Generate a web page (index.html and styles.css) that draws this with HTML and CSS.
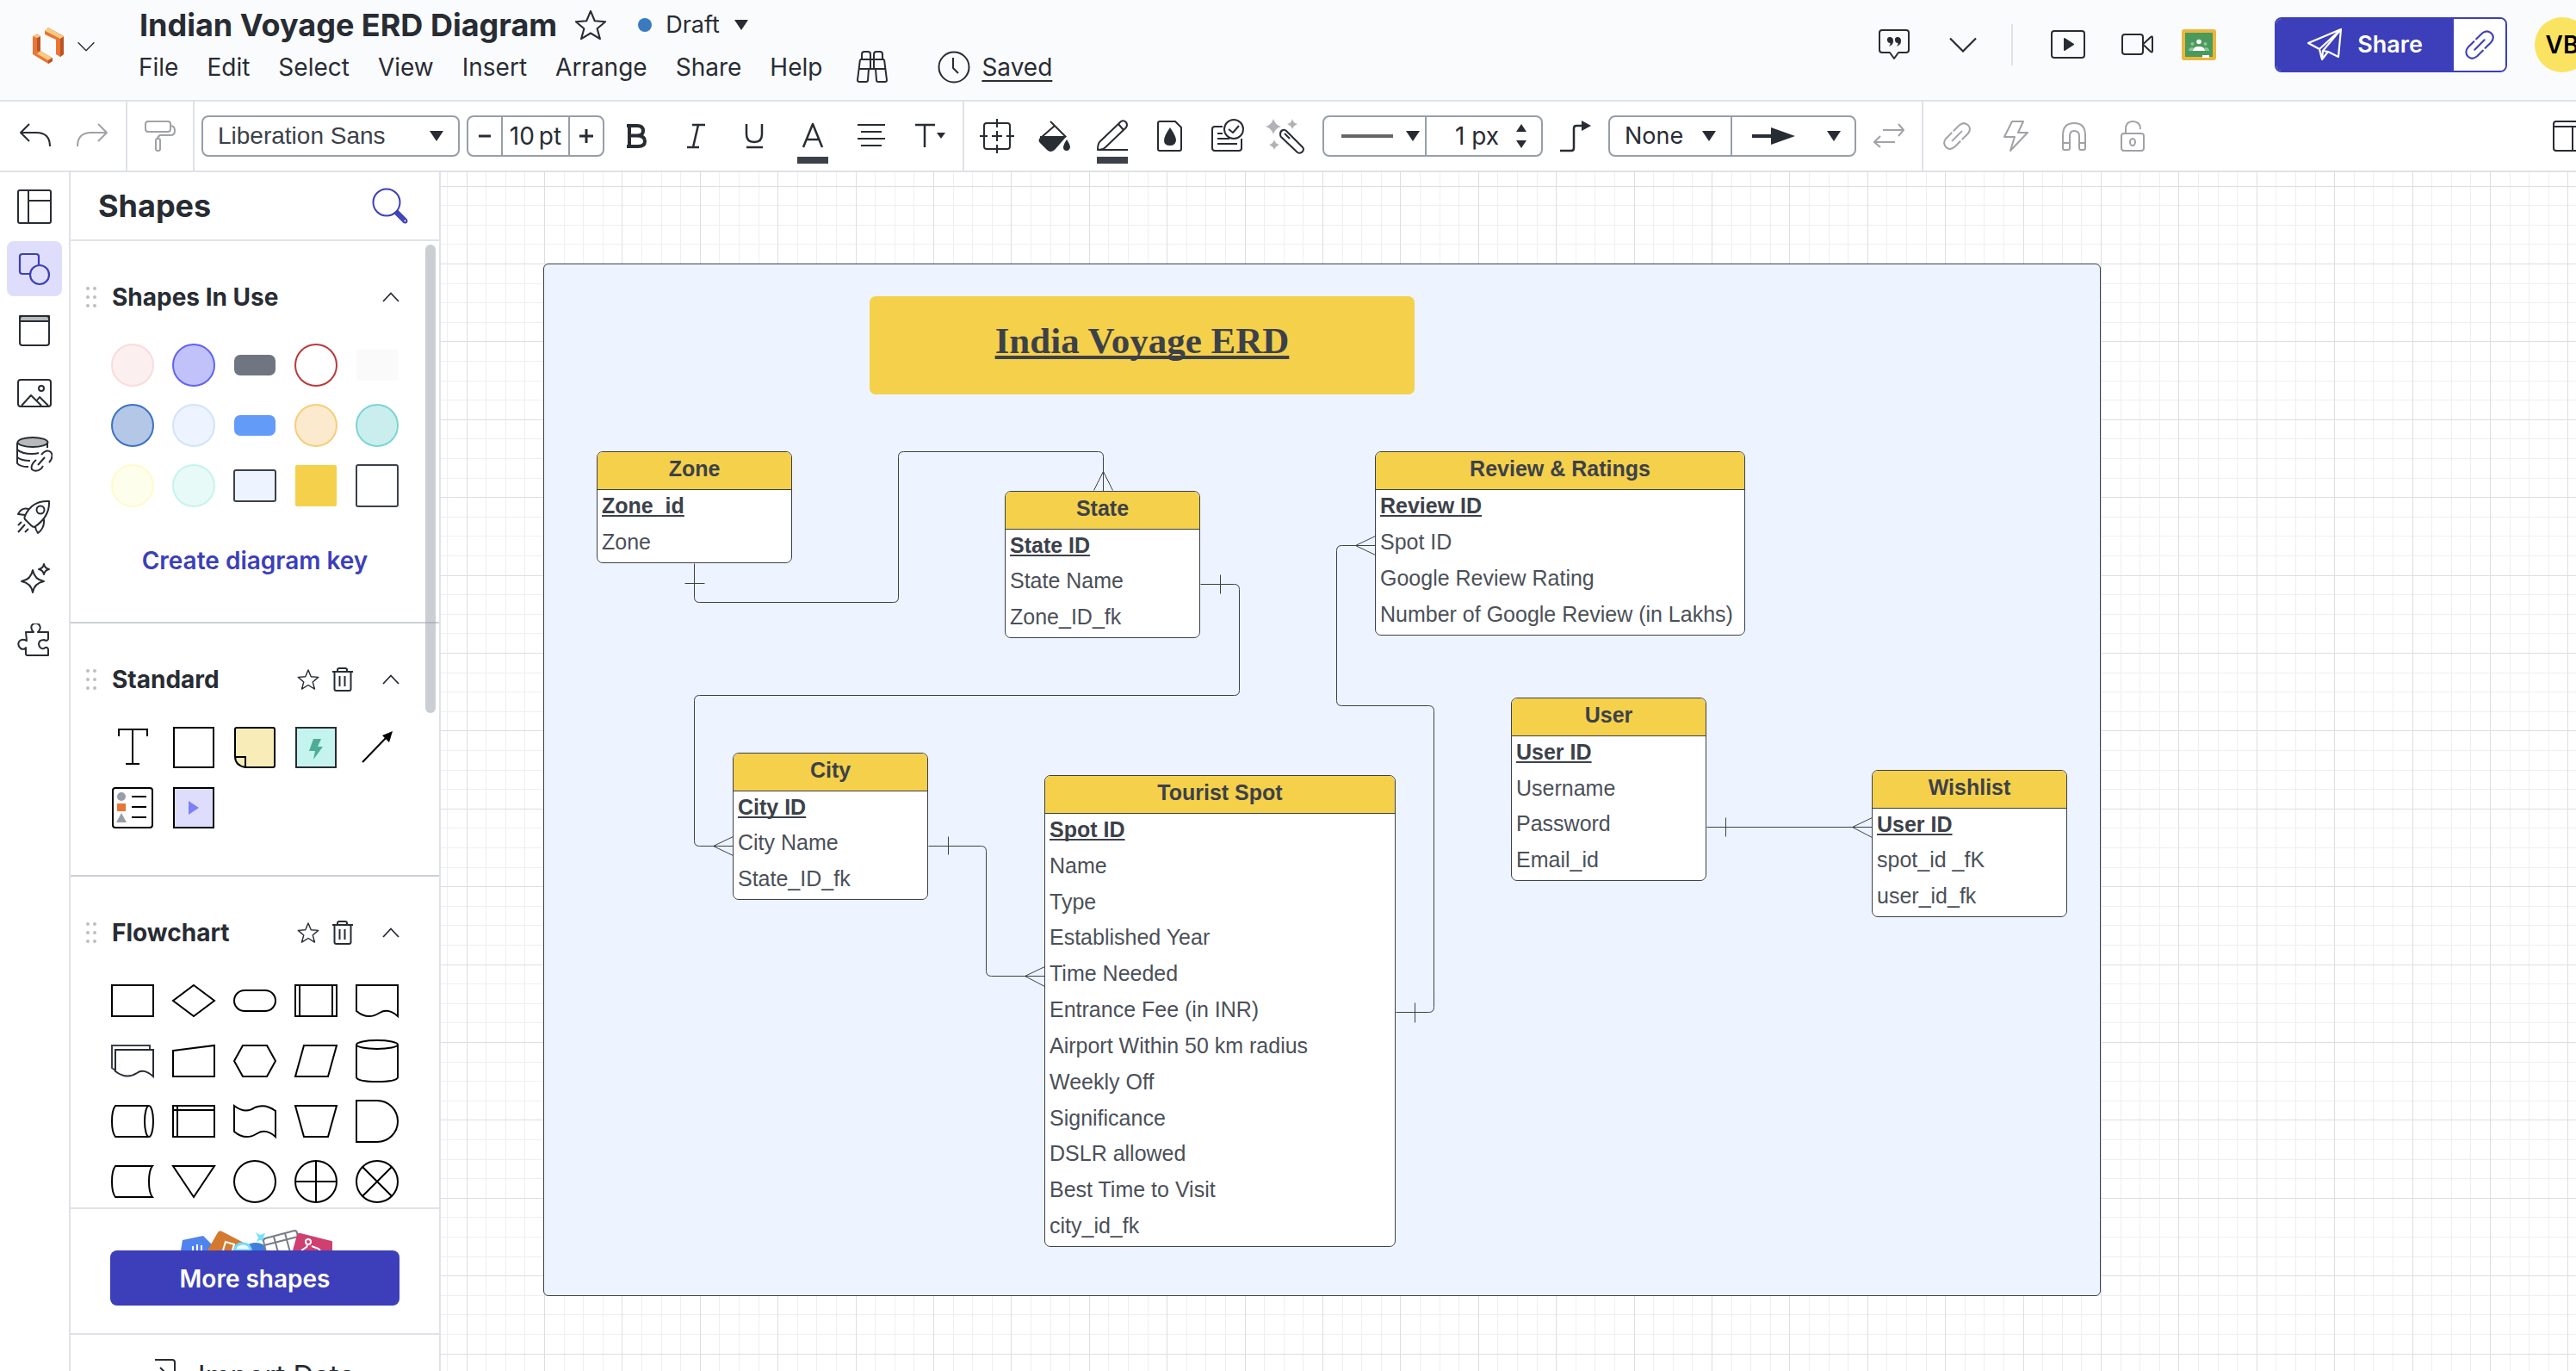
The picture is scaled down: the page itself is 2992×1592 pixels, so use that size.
FILE: index.html
```html
<!DOCTYPE html>
<html lang="en">
<head>
<meta charset="utf-8">
<title>Indian Voyage ERD Diagram</title>
<link rel="stylesheet" href="styles.css">
</head>
<body>
<svg class="defs" aria-hidden="true">
  <symbol id="caret" viewBox="0 0 16 12"><path d="M0 0H16L8 12Z" fill="#282c33"/></symbol>
  <symbol id="chev-down" viewBox="0 0 32 18"><path d="M1 1.500L16 16.500L31 1.500" fill="none" stroke="#282c33" stroke-width="2.200"/></symbol>
  <symbol id="chev-up" viewBox="0 0 20 12"><path d="M1 11L10 1.500L19 11" fill="none" stroke="#282c33" stroke-width="1.800"/></symbol>
  <symbol id="grip" viewBox="0 0 12 24"><g fill="#bfbfbf"><circle cx="2" cy="2" r="2"/><circle cx="10" cy="2" r="2"/><circle cx="2" cy="12" r="2"/><circle cx="10" cy="12" r="2"/><circle cx="2" cy="22" r="2"/><circle cx="10" cy="22" r="2"/></g></symbol>
  <symbol id="star" viewBox="0 0 40 40"><path d="M20 3L25 15L38 16L28 24.500L31.500 37L20 30L8.500 37L12 24.500L2 16L15 15Z" fill="none" stroke="currentColor" stroke-width="2.200" stroke-linejoin="round"/></symbol>
  <symbol id="trash" viewBox="0 0 24 28"><path d="M0 5H24M6 5V3Q6 1 8 1H15Q17 1 17 3V5M2.500 5V25Q2.500 27 4.500 27H19.500Q21.500 27 21.500 25V5M8.500 10V22M14.500 10V22" fill="none" stroke="#282c33" stroke-width="2"/></symbol>
  <symbol id="link" viewBox="0 0 40 40"><g fill="none" stroke="currentColor" stroke-width="2.200" stroke-linecap="round" stroke-linejoin="round"><path d="M14 26L26 14"/><path d="M16 13L23 6Q29 1 34.500 6Q39 11 34 17L27 24"/><path d="M13 16L6 23Q1 29 6 34.500Q11 39 17 34L24 27"/></g></symbol>
</svg>

<header class="topbar">
  <button class="logo" aria-label="Documents">
    <svg width="36" height="42" viewBox="0 0 36 42"><path d="M0 10L5 7.500L9 10V27L14 30V30L23 35.500V39L18 42L0 31Z" fill="#e97635"/><path d="M5 12L9 10V28L5 27Z" fill="#bd5424"/><path d="M0 10L5 8L9 10L5 12Z" fill="#f7cb82"/><path d="M9 27L23 35L18 38L5 30.500Z" fill="#f7cb82"/><path d="M18 38L23 35V39L18 42Z" fill="#bd5424"/><path d="M14 4L18 0L36 10V31L32 34L27 31V14L14 8Z" fill="#e97635"/><path d="M14 3.500L18 0L36 10.500L32 13Z" fill="#f7cb82"/><path d="M32 13L36 10.500V31L32 34Z" fill="#bd5424"/></svg>
    <svg width="20" height="12" viewBox="0 0 32 18" class="ic"><use href="#chev-down"/></svg>
  </button>
  <div class="doc">
    <div class="doc-row">
      <h1>Indian Voyage ERD Diagram</h1>
      <button class="plain star-doc" aria-label="Favorite"><svg width="38" height="38"><use href="#star"/></svg></button>
      <span class="dot"></span>
      <button class="plain draft">Draft <svg width="16" height="12"><use href="#caret"/></svg></button>
    </div>
    <nav class="menu">
      <button class="plain">File</button><button class="plain">Edit</button><button class="plain">Select</button><button class="plain">View</button><button class="plain">Insert</button><button class="plain">Arrange</button><button class="plain">Share</button><button class="plain">Help</button>
      <button class="plain find" aria-label="Find"><svg width="38" height="38" viewBox="0 0 38 38" class="ln"><path d="M7 10V4Q7 1 10 1H14Q17 1 17 4V21M21 21V4Q21 1 24 1H28Q31 1 31 4V10M17 10H21M5 10H33M5 10L2 34Q2 36 4 36H12Q14 36 14 34L15 21H23L24 34Q24 36 26 36H34Q36 36 36 34L33 10M3 21H15M23 21H35"/></svg></button>
      <svg width="38" height="38" viewBox="0 0 38 38" class="ln clock"><circle cx="19" cy="19" r="17.500"/><path d="M18 8V20L24 26"/></svg>
      <a href="#history" class="saved">Saved</a>
    </nav>
  </div>
  <div class="actions">
    <button class="plain" aria-label="Comments"><svg width="36" height="36" viewBox="0 0 36 36" class="ln"><path d="M4 1H32Q35 1 35 4V24Q35 27 32 27H23L18 34L13 27H4Q1 27 1 24V4Q1 1 4 1Z"/><path d="M10 13Q9.500 9 13 9Q17 9 17 13.500Q17 18 12 20Q14 17 13.500 16Q10.500 16 10 13ZM19 13Q18.500 9 22 9Q26 9 26 13.500Q26 18 21 20Q23 17 22.500 16Q19.500 16 19 13Z" fill="#282c33" stroke="none"/></svg></button>
    <button class="plain more" aria-label="More"><svg width="32" height="18"><use href="#chev-down"/></svg></button>
    <span class="rule"></span>
    <button class="plain" aria-label="Present"><svg width="40" height="34" viewBox="0 0 40 34" class="ln"><rect x="1" y="1" width="38" height="31" rx="3"/><path d="M16 10L26 16.500L16 23Z" fill="#282c33"/></svg></button>
    <button class="plain video" aria-label="Video call"><svg width="38" height="26" viewBox="0 0 38 26" class="ln"><rect x="1" y="1" width="24" height="23" rx="3"/><path d="M25 12.500L34 4Q36 2.500 36 5V20Q36 22.500 34 21Z"/></svg></button>
    <button class="plain" aria-label="Classroom"><svg width="40" height="36" viewBox="0 0 40 36"><rect width="40" height="36" rx="3" fill="#ecb63e"/><rect x="4" y="4" width="32" height="28" fill="#4a9a5c"/><circle cx="20" cy="14.500" r="2.800" fill="#fff"/><path d="M13 25Q13 20 20 20Q27 20 27 25Z" fill="#fff"/><g fill="#8fc59a"><circle cx="12.500" cy="17" r="2"/><circle cx="27.500" cy="17" r="2"/><path d="M8 25Q8 21 13 21V25ZM32 25Q32 21 27 21V25Z"/></g><rect x="24" y="30" width="8" height="3" fill="#fff"/></svg></button>
    <div class="share-group">
      <button class="share"><svg width="40" height="38" viewBox="0 0 40 38" fill="none" stroke="#fff" stroke-width="2.200" stroke-linejoin="round"><path d="M1 17L39 1L36 33L24 27L17 36L14 24ZM39 1L14 24M39 1L18 26L17 36M18 26L24 27"/></svg>Share</button>
      <button class="share-link" aria-label="Copy link"><svg width="38" height="38"><use href="#link"/></svg></button>
    </div>
    <div class="avatar">VB</div>
  </div>
</header>

<div class="toolbar">
  <div class="tg undo">
    <button class="tb" aria-label="Undo"><svg width="40" height="40" viewBox="0 0 40 40" class="ln"><path d="M14 6L4 16L14 26M4 16H22Q38 16 38 32"/></svg></button>
    <button class="tb" aria-label="Redo" disabled><svg width="40" height="40" viewBox="0 0 40 40" class="ln off"><path d="M26 6L36 16L26 26M36 16H18Q2 16 2 32"/></svg></button>
  </div>
  <div class="tg paint">
    <button class="tb" aria-label="Format painter" disabled><svg width="40" height="40" viewBox="0 0 40 40" class="ln off"><rect x="3" y="3" width="29" height="12" rx="3"/><path d="M32 8Q37 8 37 14Q37 19 32 19H20Q17 20 17 24"/><rect x="15" y="23" width="5" height="14" rx="2"/></svg></button>
  </div>
  <div class="tg text">
    <div class="field font"><select aria-label="Font"><option>Liberation Sans</option></select><svg class="car" width="16" height="12"><use href="#caret"/></svg></div>
    <div class="field size"><button class="plain" aria-label="Smaller"><svg width="16" height="16" viewBox="0 0 16 16"><path d="M1 8H15" stroke="#282c33" stroke-width="3"/></svg></button><label class="num"><input type="text" value="10" aria-label="Font size">pt</label><button class="plain" aria-label="Larger"><svg width="16" height="16" viewBox="0 0 16 16"><path d="M0 8H16M8 0V16" stroke="#282c33" stroke-width="3"/></svg></button></div>
    <button class="tb first" aria-label="Bold"><svg width="40" height="40" viewBox="0 0 40 40" fill="none" stroke="#282c33" stroke-width="4"><path d="M8 8H20Q27 8 27 14Q27 19.500 20 19.500H11M20 19.500Q29 19.500 29 26Q29 32 21 32H8M11 8V32"/></svg></button>
    <button class="tb" aria-label="Italic"><svg width="40" height="40" viewBox="0 0 40 40" class="ln b"><path d="M16 7H31M10 33H24M23 7L17 33"/></svg></button>
    <button class="tb" aria-label="Underline"><svg width="40" height="40" viewBox="0 0 40 40" class="ln b"><path d="M11 6V18Q11 27 20 27Q29 27 29 18V6M11 33H30"/></svg></button>
    <button class="tb" aria-label="Text color"><svg width="40" height="56" viewBox="0 0 40 56" class="ln b"><path d="M9 41L20 14L31 41M13 32H27"/><rect x="2" y="52" width="36" height="8" fill="#3c4149" stroke="none"/></svg></button>
    <button class="tb" aria-label="Align"><svg width="40" height="40" viewBox="0 0 40 40" class="ln"><path d="M4 7H36M8 15H32M4 23H36M8 31H32"/></svg></button>
    <button class="tb" aria-label="Text options"><svg width="40" height="40" viewBox="0 0 40 40" class="ln b"><path d="M3 7H26M14 7V33"/><path d="M28 16H38L33 23Z" fill="#282c33" stroke="none"/></svg></button>
  </div>
  <div class="tg shape">
    <button class="tb" aria-label="Position"><svg width="40" height="40" viewBox="0 0 40 40" class="ln"><rect x="5" y="5" width="30" height="30" rx="3"/><path d="M20 0V10M20 30V40M0 20H9M31 20H40M14 20H26M20 14V26"/></svg></button>
    <button class="tb" aria-label="Fill"><svg width="40" height="40" viewBox="0 0 40 40" class="ln"><path d="M15 3L33 21M20 8L5 21"/><path d="M3 20H34L20 36Q15 40 11 36L3 28Q0 25 3 22Z" fill="#282c33" stroke="none"/><path d="M34 24Q38 30 38 33Q37 37 34 37Q30 37 30 33Q30 30 34 24Z" fill="#282c33" stroke="none"/></svg></button>
    <button class="tb" aria-label="Line color"><svg width="40" height="56" viewBox="0 0 40 56" class="ln"><path d="M3 44H38M3 44Q3 36 6 34L30 11Q33 9 36 12Q38 15 36 18L12 41Q9 44 3 44ZM27 14L33 21"/><rect x="2" y="52" width="36" height="8" fill="#3c4149" stroke="none"/></svg></button>
    <button class="tb" aria-label="Opacity"><svg width="40" height="40" viewBox="0 0 40 40" class="ln"><path d="M8 3H26L33 10V35Q33 37 31 37H8Q6 37 6 35V5Q6 3 8 3Z"/><path d="M20 10Q27 20 27 25Q26 31 20 31Q13 31 13 25Q13 20 20 10Z" fill="#282c33" stroke="none"/></svg></button>
    <button class="tb" aria-label="Tasks"><svg width="40" height="40" viewBox="0 0 40 40" class="ln"><path d="M14 9H5Q2 9 2 12V34Q2 37 5 37H33Q36 37 36 34V23"/><path d="M8 17H14M8 23H22M8 29H31"/><circle cx="27" cy="12" r="11"/><path d="M21 12L26 16L33 8"/></svg></button>
    <button class="tb" aria-label="Magic wand"><svg width="46" height="42" viewBox="0 0 46 42" class="ln"><path d="M9 1Q11 8 18 10Q11 12 9 19Q7 12 0 10Q7 8 9 1ZM31 1Q32 6 37 7Q32 9 31 13Q30 9 25 7Q30 6 31 1ZM10 25Q11 30 16 31Q11 33 10 37Q9 33 4 31Q9 30 10 25Z" fill="#b0b2b5" stroke="none"/><path d="M17 19Q17 15 20 14Q22 13 24 15L43 34Q45 36 43 39Q40 42 37 40L18 22Q17 21 17 19ZM22 18L28 24"/></svg></button>
    <div class="field line"><button class="plain seg" aria-label="Line style"><svg width="60" height="6" viewBox="0 0 60 6"><path d="M0 3H60" stroke="#666" stroke-width="4"/></svg><svg width="16" height="12"><use href="#caret"/></svg></button><label class="px"><input type="text" value="1 px" aria-label="Line width"><svg width="14" height="28" viewBox="0 0 14 28"><path d="M7 0L13 9H1ZM7 28L13 19H1Z" fill="#282c33"/></svg></label></div>
    <button class="tb conn" aria-label="Connector"><svg width="40" height="40" viewBox="0 0 40 40" class="ln b"><path d="M2 37H15Q18 37 18 34V11Q18 8 21 8H28"/><path d="M27 2L38 8L27 14Z" fill="#282c33" stroke="none"/></svg></button>
    <div class="field ends"><div class="seg none"><select aria-label="Line start"><option>None</option></select><svg class="car" width="16" height="12"><use href="#caret"/></svg></div><button class="plain seg" aria-label="Line end"><svg width="50" height="20" viewBox="0 0 50 20"><path d="M0 10H26" stroke="#282c33" stroke-width="4"/><path d="M22 0L50 10L22 20Z" fill="#282c33"/></svg><svg width="16" height="12"><use href="#caret"/></svg></button></div>
    <button class="tb" aria-label="Swap ends" disabled><svg width="40" height="40" viewBox="0 0 40 40" class="ln off"><path d="M13 13H37M31 6L37 13L31 20M27 27H3M10 20L3 27L10 33"/></svg></button>
  </div>
  <div class="tg extra">
    <button class="tb" aria-label="Link" disabled><svg width="36" height="36" class="grey"><use href="#link"/></svg></button>
    <button class="tb" aria-label="Actions" disabled><svg width="40" height="40" viewBox="0 0 40 40" class="ln off"><path d="M16 3H29L23 16H34L14 37L19 21H7Z"/></svg></button>
    <button class="tb" aria-label="Magnet" disabled><svg width="40" height="40" viewBox="0 0 40 40" class="ln off"><path d="M7 34V19Q7 5 20 5Q33 5 33 19V34Q33 36 31 36H28Q26 36 26 34V20Q26 14 20 14Q15 14 15 20V34Q15 36 13 36H9Q7 36 7 34M7 28H15M26 28H33"/></svg></button>
    <button class="tb" aria-label="Lock" disabled><svg width="40" height="40" viewBox="0 0 40 40" class="ln off"><rect x="7" y="17" width="26" height="20" rx="3"/><path d="M12 17V12Q12 3 20 3Q29 3 29 12"/><ellipse cx="20" cy="27" rx="3" ry="4"/></svg></button>
  </div>
  <button class="plain dock" aria-label="Toggle panel"><svg width="40" height="40" viewBox="0 0 40 40" class="ln"><rect x="2" y="3" width="36" height="34" rx="3"/><path d="M2 9H38M24 9V37"/></svg></button>
</div>

<div class="work">
  <nav class="rail">
    <button aria-label="Layout"><svg width="40" height="40" viewBox="0 0 40 40" class="ln"><rect x="1" y="1" width="38" height="38" rx="2"/><path d="M13 1V39M13 13H39"/></svg></button>
    <button class="on" aria-label="Shapes"><svg width="40" height="40" viewBox="0 0 40 40" fill="none" stroke="#3c3fb9" stroke-width="2.200"><path d="M14 26H6Q3 26 3 23V6Q3 3 6 3H22Q25 3 25 6V15"/><circle cx="26" cy="27" r="11"/></svg></button>
    <button aria-label="Containers"><svg width="40" height="40" viewBox="0 0 40 40" class="ln"><rect x="3" y="3" width="34" height="6" fill="#b8b9bb"/><rect x="3" y="3" width="34" height="34" rx="3"/><path d="M3 9H37"/></svg></button>
    <button aria-label="Images"><svg width="40" height="40" viewBox="0 0 40 40" class="ln"><rect x="1" y="5" width="38" height="31" rx="3"/><circle cx="28" cy="15" r="3"/><path d="M5 35L16 23L28 35M22 30L26 25L36 35"/></svg></button>
    <button aria-label="Data"><svg width="42" height="42" viewBox="0 0 42 42" class="ln"><ellipse cx="19" cy="6.500" rx="17.500" ry="5.500" fill="#b8b9bb"/><path d="M1 7V31Q4 35 14 35M1 15Q6 20 18 20Q23 20 26 19M1 24Q6 28 16 28M36 7V13"/><path d="M25 33L33 24M29 21Q35 14 40 18Q44 23 38 30M23 27Q16 33 18 38Q23 42 29 37L31 34"/></svg></button>
    <button aria-label="Launch"><svg width="40" height="40" viewBox="0 0 40 40" class="ln"><path d="M9 19Q17 1 37 2Q38 20 20 32Q18 32 16 30L9 23Q8 21 9 19ZM13 11Q5 9 1 17L9 18M31 23Q32 33 24 39Q21 35 21 31M1 30L5 26M1 38L9 29M9 38L13 34"/><circle cx="27" cy="12" r="4.500"/></svg></button>
    <button aria-label="AI"><svg width="40" height="40" viewBox="0 0 40 40" class="ln"><path d="M18 13Q20 24 31 26Q20 28 18 39Q16 28 5 26Q16 24 18 13ZM31 6Q32 11 37 12Q32 13 31 18Q30 13 25 12Q30 11 31 6Z" transform="translate(0 -3)"/></svg></button>
    <button aria-label="Plugins"><svg width="40" height="40" viewBox="0 0 40 40" class="ln"><path d="M10 12H19Q15 8 17 4Q20 0 25 3Q29 7 24 12H36V20Q35 23 31 21Q25 21 25 26Q26 32 31 31Q35 28 36 32V39H12Q10 39 10 37V30Q8 33 4 31Q0 28 2 23Q5 19 11 22Z" transform="translate(0 -2)"/></svg></button>
  </nav>

  <aside class="panel">
    <div class="panel-head"><h2>Shapes</h2><button class="plain" aria-label="Search shapes"><svg width="42" height="42" viewBox="0 0 42 42" fill="none" stroke="#3c3fb9" stroke-width="2"><circle cx="17" cy="17" r="15.500"/><path d="M27 30L30 27L40 37Q41 39 40 40Q38 41 37 40ZM28 28L38 38"/></svg></button></div>
    <div class="scroll">
      <section class="sec used">
        <div class="sec-head"><svg width="12" height="24"><use href="#grip"/></svg><h3>Shapes In Use</h3><button class="plain" aria-label="Collapse"><svg width="20" height="12"><use href="#chev-up"/></svg></button></div>
        <div class="grid">
          <svg viewBox="0 0 50 50"><circle cx="25" cy="25" r="24" fill="#fcefef" stroke="#f9dcdc"/></svg>
          <svg viewBox="0 0 50 50"><circle cx="25" cy="25" r="24" fill="#c1c2fa" stroke="#6063f2"/></svg>
          <svg viewBox="0 0 50 50"><rect x="1" y="13" width="48" height="24" rx="7" fill="#6f7681"/></svg>
          <svg viewBox="0 0 50 50"><circle cx="25" cy="25" r="24" fill="#fff" stroke="#b93a3a"/></svg>
          <svg viewBox="0 0 50 50"><rect x="1" y="7" width="48" height="36" rx="2" fill="#fafafa"/></svg>
          <svg viewBox="0 0 50 50"><circle cx="25" cy="25" r="24" fill="#b4c7e7" stroke="#3c72c4"/></svg>
          <svg viewBox="0 0 50 50"><circle cx="25" cy="25" r="24" fill="#edf4ff" stroke="#d2e3fb"/></svg>
          <svg viewBox="0 0 50 50"><rect x="1" y="13" width="48" height="24" rx="7" fill="#639cf8"/></svg>
          <svg viewBox="0 0 50 50"><circle cx="25" cy="25" r="24" fill="#fbeacd" stroke="#f6cd7c"/></svg>
          <svg viewBox="0 0 50 50"><circle cx="25" cy="25" r="24" fill="#caeeee" stroke="#7bd5d4"/></svg>
          <svg viewBox="0 0 50 50"><circle cx="25" cy="25" r="24" fill="#fefeec" stroke="#fdfcc9"/></svg>
          <svg viewBox="0 0 50 50"><circle cx="25" cy="25" r="24" fill="#e7faf7" stroke="#c5f4ec"/></svg>
          <svg viewBox="0 0 50 50"><rect x="1" y="7" width="48" height="36" rx="2" fill="#edf4ff" stroke="#3c4149"/></svg>
          <svg viewBox="0 0 50 50"><rect x="1" y="1" width="48" height="48" rx="2" fill="#f5d04b"/></svg>
          <svg viewBox="0 0 50 50"><rect x="1" y="1" width="48" height="48" rx="2" fill="#fff" stroke="#3c4149"/></svg>
        </div>
        <a class="key" href="#key">Create diagram key</a>
      </section>
      <section class="sec std">
        <div class="sec-head"><svg width="12" height="24"><use href="#grip"/></svg><h3>Standard</h3><button class="plain" aria-label="Favorite"><svg width="26" height="26"><use href="#star"/></svg></button><button class="plain bin" aria-label="Remove"><svg width="24" height="28"><use href="#trash"/></svg></button><button class="plain" aria-label="Collapse"><svg width="20" height="12"><use href="#chev-up"/></svg></button></div>
        <div class="grid">
          <svg viewBox="0 0 50 50"><path d="M9 12V4H42V12M25 4V44M17 44H33"/></svg>
          <svg viewBox="0 0 50 50"><rect x="2" y="2" width="46" height="46"/></svg>
          <svg viewBox="0 0 50 50"><path d="M4 2H46Q48 2 48 4V46Q48 48 46 48H14Q2 46 2 35V4Q2 2 4 2ZM2 36H14V48" fill="#f8edb8"/></svg>
          <svg viewBox="0 0 50 50"><rect x="2" y="2" width="46" height="46" fill="#c5f3ed" stroke="#282c33"/><path d="M22 15H31L27 24H33L22 39L24 29H17Z" fill="#4dac98" stroke="none"/></svg>
          <svg viewBox="0 0 50 50"><path d="M8 42L36 13"/><path d="M43 6L39 19L31 11Z" fill="#000" stroke="none"/></svg>
          <svg viewBox="0 0 50 50"><rect x="2" y="2" width="46" height="46" rx="3"/><path d="M24 12H41M24 24H41M24 36H41"/><g stroke="none"><circle cx="12" cy="12" r="5" fill="#979ea8"/><rect x="7" y="20" width="10" height="9" fill="#e97635"/><path d="M12 31L18 42H6Z" fill="#979ea8"/></g></svg>
          <svg viewBox="0 0 50 50"><rect x="2" y="2" width="46" height="46" fill="#dedefc"/><path d="M19 17L31 25L19 33Z" fill="#7c7ff8" stroke="none"/></svg>
        </div>
      </section>
      <section class="sec">
        <div class="sec-head"><svg width="12" height="24"><use href="#grip"/></svg><h3>Flowchart</h3><button class="plain" aria-label="Favorite"><svg width="26" height="26"><use href="#star"/></svg></button><button class="plain bin" aria-label="Remove"><svg width="24" height="28"><use href="#trash"/></svg></button><button class="plain" aria-label="Collapse"><svg width="20" height="12"><use href="#chev-up"/></svg></button></div>
        <div class="grid">
          <svg viewBox="0 0 50 50"><rect x="1" y="7" width="48" height="36"/></svg>
          <svg viewBox="0 0 50 50"><path d="M25 7L49 25L25 43L1 25Z"/></svg>
          <svg viewBox="0 0 50 50"><rect x="1" y="13" width="48" height="24" rx="12"/></svg>
          <svg viewBox="0 0 50 50"><path d="M1 7H49V43H1ZM6 7V43M44 7V43"/></svg>
          <svg viewBox="0 0 50 50"><path d="M1 7H49V43Q38 33 28 39Q14 48 1 37Z"/></svg>
          <svg viewBox="0 0 50 50"><path d="M45 12V7H1V33L5 36" stroke="#3c4149"/><path d="M5 12H49V43Q38 33 30 39Q18 47 5 37Z" stroke="#282c33"/></svg>
          <svg viewBox="0 0 50 50"><path d="M1 13L49 7V43H1Z"/></svg>
          <svg viewBox="0 0 50 50"><path d="M11 7H39L49 25L39 43H11L1 25Z"/></svg>
          <svg viewBox="0 0 50 50"><path d="M11 7H49L39 43H1Z"/></svg>
          <svg viewBox="0 0 50 50"><path d="M1 6V44Q2 49 25 49Q48 49 49 44V6"/><ellipse cx="25" cy="6" rx="24" ry="5"/></svg>
          <svg viewBox="0 0 50 50"><path d="M44 7H5Q1 12 1 25Q1 38 5 43H44"/><ellipse cx="44" cy="25" rx="5" ry="18"/></svg>
          <svg viewBox="0 0 50 50"><path d="M1 7H49V43H1ZM6 7V43M1 12H49"/></svg>
          <svg viewBox="0 0 50 50"><path d="M1 7Q14 17 25 9Q37 4 49 13V43Q38 33 28 39Q14 48 1 37Z"/></svg>
          <svg viewBox="0 0 50 50"><path d="M1 7H49L39 43H11Z"/></svg>
          <svg viewBox="0 0 50 50"><path d="M1 1H25A24 24 0 0 1 25 49H1Z"/></svg>
          <svg viewBox="0 0 50 50"><path d="M48 7H5Q1 12 1 25Q1 38 5 43H48Q44 38 44 25Q44 12 48 7Z"/></svg>
          <svg viewBox="0 0 50 50"><path d="M1 7H49L25 43Z"/></svg>
          <svg viewBox="0 0 50 50"><circle cx="25" cy="25" r="24"/></svg>
          <svg viewBox="0 0 50 50"><circle cx="25" cy="25" r="24"/><path d="M25 1V49M1 25H49"/></svg>
          <svg viewBox="0 0 50 50"><circle cx="25" cy="25" r="24"/><path d="M8 8L42 42M42 8L8 42"/></svg>
        </div>
      </section>
      <div class="thumb"></div>
    </div>
    <div class="foot">
      <svg width="180" height="24" viewBox="206 0 180 24"><path d="M210 24L212 12L236 7L246 17L243 24Z" fill="#5183ec"/><path d="M224 24V19M229 24V17M234 24V18" stroke="#fff" stroke-width="2"/><path d="M241 24L253 3Q255 0 258 2L283 15V24Z" fill="#d37a30"/><path d="M259 24L262 14L272 17L270 24" fill="none" stroke="#fff" stroke-width="2"/><circle cx="297" cy="33" r="18" fill="#3f7fdc"/><path d="M273 24Q273 16 282 16Q289 16 291 22V24Z" fill="#f3f5f8" stroke="#72dcf8" stroke-width="3"/><path d="M297 3L302 6L308 4L306 9L308 14L302 12L298 14L300 9Z" fill="#72e3fb"/><path d="M309 26L306 13Q306 11 308 10L342 1Q345 1 345 4L350 26M307 18L346 8M318 8L323 26M331 4L337 26" fill="#fff" stroke="#777e88" stroke-width="2"/><path d="M340 24L345 6Q346 3 349 4L385 13Q388 14 388 17L386 24Z" fill="#cf3f70"/><path d="M350 24L356 20L358 16M362 19L370 22L372 24" fill="none" stroke="#fff" stroke-width="2"/><circle cx="358" cy="14" r="3" fill="none" stroke="#fff" stroke-width="2"/></svg>
      <button class="more-shapes">More shapes</button>
    </div>
    <button class="import"><svg width="24" height="36" viewBox="0 0 24 36" class="ln"><path d="M0 1H20Q23 1 23 4V35M6 10L12 16"/></svg>Import Data</button>
  </aside>

  <main class="canvas">
    <svg class="full" aria-hidden="true">
      <defs><pattern id="paper" x="120" y="106" width="452" height="452" patternUnits="userSpaceOnUse">
        <path d="M23 0V452M45 0V452M68 0V452M113 0V452M136 0V452M158 0V452M203 0V452M226 0V452M249 0V452M294 0V452M316 0V452M339 0V452M384 0V452M407 0V452M429 0V452M0 23H452M0 45H452M0 68H452M0 113H452M0 136H452M0 158H452M0 203H452M0 226H452M0 249H452M0 294H452M0 316H452M0 339H452M0 384H452M0 407H452M0 429H452" stroke="#efefef" transform="translate(.5 .5)"/>
        <path d="M0 0V452M90 0V452M181 0V452M271 0V452M362 0V452M0 0H452M0 90H452M0 181H452M0 271H452M0 362H452" stroke="#dedede" transform="translate(.5 .5)"/>
      </pattern></defs>
      <rect width="100%" height="100%" fill="url(#paper)"/>
    </svg>
    <div class="frame"></div>
    <div class="banner">India Voyage ERD</div>

    <table class="ent zone"><thead><tr><th>Zone</th></tr></thead><tbody><tr><td class="pk">Zone_id</td></tr><tr><td>Zone</td></tr></tbody></table>
    <table class="ent state"><thead><tr><th>State</th></tr></thead><tbody><tr><td class="pk">State ID</td></tr><tr><td>State Name</td></tr><tr><td>Zone_ID_fk</td></tr></tbody></table>
    <table class="ent review"><thead><tr><th>Review &amp; Ratings</th></tr></thead><tbody><tr><td class="pk">Review ID</td></tr><tr><td>Spot ID</td></tr><tr><td>Google Review Rating</td></tr><tr><td>Number of Google Review (in Lakhs)</td></tr></tbody></table>
    <table class="ent user"><thead><tr><th>User</th></tr></thead><tbody><tr><td class="pk">User ID</td></tr><tr><td>Username</td></tr><tr><td>Password</td></tr><tr><td>Email_id</td></tr></tbody></table>
    <table class="ent wish"><thead><tr><th>Wishlist</th></tr></thead><tbody><tr><td class="pk">User ID</td></tr><tr><td>spot_id _fK</td></tr><tr><td>user_id_fk</td></tr></tbody></table>
    <table class="ent city"><thead><tr><th>City</th></tr></thead><tbody><tr><td class="pk">City ID</td></tr><tr><td>City Name</td></tr><tr><td>State_ID_fk</td></tr></tbody></table>
    <table class="ent spot"><thead><tr><th>Tourist Spot</th></tr></thead><tbody><tr><td class="pk">Spot ID</td></tr><tr><td>Name</td></tr><tr><td>Type</td></tr><tr><td>Established Year</td></tr><tr><td>Time Needed</td></tr><tr><td>Entrance Fee (in INR)</td></tr><tr><td>Airport Within 50 km radius</td></tr><tr><td>Weekly Off</td></tr><tr><td>Significance</td></tr><tr><td>DSLR allowed</td></tr><tr><td>Best Time to Visit</td></tr><tr><td>city_id_fk</td></tr></tbody></table>

    <svg class="full wires" aria-hidden="true"><g transform="translate(-511.500 -199.500)" fill="none" stroke="#3c4149">
      <path d="M806 654V693Q806 699 812 699H1037Q1043 699 1043 693V530Q1043 524 1049 524H1275Q1281 524 1281 530V570M795 677H818M1270 569L1281 547L1292 569"/>
      <path d="M1394 678H1433Q1439 678 1439 684V801Q1439 807 1433 807H812Q806 807 806 813V976Q806 982 812 982H851M1417 667V689M851 971L828 982L851 993"/>
      <path d="M1078 982H1139Q1145 982 1145 988V1127Q1145 1133 1151 1133H1213M1101 971V992M1213 1122L1190 1133L1213 1145"/>
      <path d="M1621 1175H1659Q1665 1175 1665 1169V825Q1665 819 1659 819H1558Q1552 819 1552 813V639Q1552 633 1558 633H1597M1643 1164V1187M1597 622L1574 633L1597 644"/>
      <path d="M1982 960H2174M2004 949V971M2174 949L2151 960L2174 972"/>
    </g></svg>
  </main>
</div>
</body>
</html>
```
FILE: styles.css
```css
* { box-sizing: border-box; }
body { margin: 0; height: 100vh; overflow: hidden; display: flex; flex-direction: column; background: #fff; color: #282c33; font-family: Inter, "Liberation Sans", sans-serif; font-size: 28px; line-height: 36px; }
h1, h2, h3 { margin: 0; font-weight: 700; }
button, input, select { font: inherit; color: inherit; }
svg { display: block; flex: none; }
.defs { position: absolute; width: 0; height: 0; }
.plain { border: 0; background: none; padding: 0; display: flex; align-items: center; white-space: nowrap; flex: none; }
.ln { fill: none; stroke: #282c33; stroke-width: 2; stroke-linejoin: round; }
.ln.b { stroke-width: 2.500px; }
.off { stroke: #a0a2a6; }
.grey { color: #a0a2a6; }

/* Document header */
.topbar { flex: none; height: 118px; display: flex; background: #fafbfd; border-bottom: 2px solid #dfe2e7; overflow: hidden; }
.logo { border: 0; background: none; padding: 32px 0 0 38px; width: 161px; display: flex; gap: 16px; flex: none; align-items: flex-start; }
.logo .ic { margin-top: 16px; }
.doc { display: flex; flex-direction: column; }
.doc-row { display: flex; align-items: center; height: 58px; padding-left: 1px; }
h1 { font-size: 36px; line-height: 44px; white-space: nowrap; }
.star-doc { margin-left: 20px; }
.dot { width: 16px; height: 16px; border-radius: 50%; background: #3a7bbf; margin: 0 16px 0 36px; }
.draft { gap: 17px; font-size: 27px; }
.menu { display: flex; align-items: center; gap: 33px; height: 40px; }
.find { margin-left: 6px; }
.clock { margin-left: 24px; }
.saved { color: inherit; text-underline-offset: 5px; text-decoration-thickness: 2px; margin-left: -20px; }
.actions { margin-left: auto; margin-right: -16px; height: 104px; display: flex; align-items: center; flex: none; }
.more { margin: 0 40px 0 46px; }
.rule { width: 2px; height: 48px; background: #dfe2e7; margin-right: 44px; }
.video { margin: 0 32px 0 42px; }
.share-group { display: flex; height: 64px; margin: 0 32px 0 68px; border: 2px solid #3c3fb9; border-radius: 8px; overflow: hidden; }
.share { border: 0; background: #3c3fb9; color: #fff; font-weight: 600; font-size: 27px; width: 206px; padding: 0; display: flex; align-items: center; justify-content: center; gap: 18px; }
.share-link { border: 0; background: #fff; color: #3c3fb9; width: 60px; padding: 0; display: flex; align-items: center; justify-content: center; }
.avatar { width: 64px; height: 64px; border-radius: 50%; background: #fbe362; color: #000; font-weight: 600; line-height: 64px; text-align: center; }

/* Toolbar */
.toolbar { flex: none; height: 82px; display: flex; border-bottom: 2px solid #dfe2e7; overflow: hidden; }
.tg { display: flex; align-items: center; border-right: 2px solid #dfe2e7; flex: none; }
.tg.undo { padding: 0 4px 0 6px; }
.tg.paint { padding: 0 4px; }
.tg.text { padding: 0 4px 0 8px; }
.tg.shape { padding: 0 5px 0 4px; }
.tg.extra { padding-left: 5px; border: 0; }
.tb { width: 68px; height: 80px; border: 0; background: none; padding: 0; display: flex; align-items: center; justify-content: center; flex: none; }
.shape .tb { width: 67px; }
.tb svg[height="56"] { overflow: visible; }
.tb.first { margin-left: 4px; }
.field { height: 48px; border: 2px solid #979ea8; border-radius: 8px; display: flex; flex: none; position: relative; overflow: hidden; background: #fff; }
.field select { appearance: none; border: 0; background: none; outline: 0; padding: 0 0 0 17px; width: 100%; height: 44px; }
.field input { border: 0; background: none; padding: 0; outline: 0; }
.car { position: absolute; right: 17px; top: 16px; pointer-events: none; }
.font { width: 300px; margin-right: 8px; }
.font select { font-family: "Liberation Sans", Arial, sans-serif; color: #3c4149; }
.size { width: 160px; }
.size button { width: 38px; justify-content: center; }
.num { flex: 1; display: flex; align-items: center; justify-content: center; border: solid #979ea8; border-width: 0 2px; }
.num input { width: 34px; }
.line { width: 256px; margin: 0 4px 0 10px; }
.seg { flex: none; display: flex; align-items: center; justify-content: space-between; padding: 0 6px 0 20px; width: 117px; position: relative; }
.px { flex: 1; display: flex; align-items: center; justify-content: space-between; border-left: 2px solid #979ea8; padding: 0 16px 0 33px; }
.px input { width: 66px; }
.ends { width: 288px; margin: 0 4px 0 5px; }
.ends select { font-size: 27px; }
.ends .seg { width: 142px; border-right: 2px solid #979ea8; padding: 0; }
.ends button.seg { border: 0; padding: 0 16px 0 23px; }
.dock { margin-left: auto; margin-right: -12px; }

/* Work area */
.work { flex: 1; min-height: 0; display: flex; }
.rail { width: 82px; flex: none; border-right: 2px solid #dfe2e7; padding: 8px; display: flex; flex-direction: column; gap: 8px; }
.rail button { height: 64px; border: 0; border-radius: 8px; background: none; padding: 0; display: flex; align-items: center; justify-content: center; }
.rail .on { background: #dedefc; }
.panel { width: 430px; flex: none; border-right: 2px solid #dfe2e7; display: flex; flex-direction: column; }
.panel-head { height: 80px; flex: none; border-bottom: 2px solid #dfe2e7; display: flex; align-items: center; justify-content: space-between; padding: 0 36px 0 32px; }
.panel-head h2 { font-size: 36px; line-height: 44px; }
.scroll { flex: 1; min-height: 0; overflow: hidden; position: relative; }
.thumb { position: absolute; right: 4px; top: 4px; width: 12px; height: 544px; border-radius: 6px; background: #979ea880; }
.sec { padding-top: 32px; border-bottom: 2px solid #ccd0d6; }
.sec.std { padding-bottom: 43px; }
.sec.used { padding-bottom: 19px; }
.sec-head { display: flex; align-items: center; height: 66px; padding: 0 46px 0 18px; }
.sec-head h3 { flex: 1; font-size: 28px; margin-left: 18px; }
.bin { margin: 0 34px 0 15px; }
.grid { display: grid; grid-template-columns: repeat(5, 71px); grid-auto-rows: 70px; place-items: center; padding: 11px 0 0 36px; }
.grid svg { width: 50px; height: 50px; overflow: visible; fill: none; stroke: #000; stroke-width: 2; }
.used .grid svg { stroke: none; }
.key { display: block; height: 104px; line-height: 104px; text-align: center; color: #3c3fb9; font-weight: 600; text-decoration: none; }
.foot { flex: none; height: 148px; border: solid #dfe2e7; border-width: 2px 0; padding: 24px 46px 32px; display: flex; flex-direction: column; align-items: center; }
.more-shapes { width: 100%; height: 64px; flex: none; border: 0; border-radius: 8px; background: #3c3fb9; color: #fff; font-weight: 600; padding: 2px 0 0; }
.import { flex: none; height: 42px; overflow: hidden; border: 0; background: none; padding: 28px 0 0; display: flex; justify-content: center; align-items: flex-start; gap: 26px; font-size: 33px; line-height: 38px; }

/* Diagram canvas */
.canvas { flex: 1; min-width: 0; position: relative; overflow: hidden; }
.full { position: absolute; inset: 0; width: 100%; height: 100%; }
.frame { position: absolute; left: 119px; top: 106px; width: 1809px; height: 1199px; border: 1px solid #3c4149; border-radius: 6px; background: #edf4ff; }
.banner { position: absolute; left: 498px; top: 144px; width: 633px; height: 114px; border-radius: 7px; background: #f5d04b; color: #3c4149; font: 700 43px/104px "Liberation Serif", "Times New Roman", serif; text-align: center; text-decoration: underline; text-decoration-skip-ink: none; }
.ent { position: absolute; width: 227px; border: 1px solid #3c4149; border-radius: 7px; border-spacing: 0; background: #fff; overflow: hidden; color: #4b5058; font: 25px/30px "Liberation Sans", Arial, sans-serif; }
.ent th { height: 44px; padding: 0 0 6px; background: #f5d04b; color: #3c4149; border-bottom: 1px solid #3c4149; border-radius: 6px 6px 0 0; }
.ent td { padding: 0 0 6px 5px; white-space: nowrap; }
.ent .pk { font-weight: 700; color: #3c4149; text-decoration: underline; text-decoration-skip-ink: none; }
.zone { left: 181px; top: 324px; height: 130px; }
.state { left: 655px; top: 370px; height: 171px; }
.review { left: 1085px; top: 324px; width: 430px; height: 214px; }
.user { left: 1243px; top: 610px; height: 213px; }
.wish { left: 1662px; top: 694px; height: 171px; }
.city { left: 339px; top: 674px; height: 171px; }
.spot { left: 701px; top: 700px; width: 408px; height: 548px; }
```
